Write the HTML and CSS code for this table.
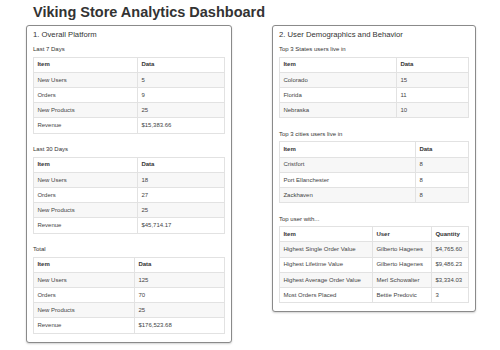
FILE: index.html
```html
<!DOCTYPE html>
<html>
<head>
<meta charset="utf-8">
<link rel="stylesheet" href="styles.css">
</head>
<body>
<h1 class="page-title">Viking Store Analytics Dashboard</h1>
<div class="columns">
  <section class="panel panel-left">
    <h4 class="panel-title">1. Overall Platform</h4>
    <h5 class="sub first">Last 7 Days</h5>
    <table class="tbl">
      <thead><tr><th class="w104">Item</th><th>Data</th></tr></thead>
      <tbody>
        <tr><td>New Users</td><td>5</td></tr>
        <tr><td>Orders</td><td>9</td></tr>
        <tr><td>New Products</td><td>25</td></tr>
        <tr><td>Revenue</td><td>$15,383.66</td></tr>
      </tbody>
    </table>
    <h5 class="sub">Last 30 Days</h5>
    <table class="tbl">
      <thead><tr><th class="w104">Item</th><th>Data</th></tr></thead>
      <tbody>
        <tr><td>New Users</td><td>18</td></tr>
        <tr><td>Orders</td><td>27</td></tr>
        <tr><td>New Products</td><td>25</td></tr>
        <tr><td>Revenue</td><td>$45,714.17</td></tr>
      </tbody>
    </table>
    <h5 class="sub">Total</h5>
    <table class="tbl">
      <thead><tr><th class="w101">Item</th><th>Data</th></tr></thead>
      <tbody>
        <tr><td>New Users</td><td>125</td></tr>
        <tr><td>Orders</td><td>70</td></tr>
        <tr><td>New Products</td><td>25</td></tr>
        <tr><td>Revenue</td><td>$176,523.68</td></tr>
      </tbody>
    </table>
  </section>
  <section class="panel panel-right">
    <h4 class="panel-title">2. User Demographics and Behavior</h4>
    <h5 class="sub first">Top 3 States users live in</h5>
    <table class="tbl">
      <thead><tr><th class="w117">Item</th><th>Data</th></tr></thead>
      <tbody>
        <tr><td>Colorado</td><td>15</td></tr>
        <tr><td>Florida</td><td>11</td></tr>
        <tr><td>Nebraska</td><td>10</td></tr>
      </tbody>
    </table>
    <h5 class="sub">Top 3 cities users live in</h5>
    <table class="tbl">
      <thead><tr><th class="w136">Item</th><th>Data</th></tr></thead>
      <tbody>
        <tr><td>Cristfort</td><td>8</td></tr>
        <tr><td>Port Ellanchester</td><td>8</td></tr>
        <tr><td>Zackhaven</td><td>8</td></tr>
      </tbody>
    </table>
    <h5 class="sub">Top user with...</h5>
    <table class="tbl">
      <thead><tr><th class="w93">Item</th><th class="w59">User</th><th>Quantity</th></tr></thead>
      <tbody>
        <tr><td>Highest Single Order Value</td><td>Gilberto Hagenes</td><td>$4,765.60</td></tr>
        <tr><td>Highest Lifetime Value</td><td>Gilberto Hagenes</td><td>$9,486.23</td></tr>
        <tr><td>Highest Average Order Value</td><td>Merl Schowalter</td><td>$3,334.03</td></tr>
        <tr><td>Most Orders Placed</td><td>Bettie Predovic</td><td>3</td></tr>
      </tbody>
    </table>
  </section>
</div>
</body>
</html>
```

FILE: styles.css
```css
html, body {
  margin: 0;
  padding: 0;
  background: #ffffff;
}
body {
  font-family: "Liberation Sans", Arial, Helvetica, sans-serif;
  color: #333333;
  width: 500px;
  height: 350px;
  overflow: hidden;
}
.page-title {
  margin: 0 0 0 33px;
  padding-top: 3px;
  font-size: 14.5px;
  line-height: 18px;
  font-weight: bold;
  color: #333333;
}
.columns {
  display: flex;
  align-items: flex-start;
  gap: 40px;
  padding-left: 26px;
  margin-top: 4px;
}
.panel {
  box-sizing: border-box;
  border: 1px solid #8a8a8a;
  border-radius: 3px;
  box-shadow: 0 1px 2px rgba(0, 0, 0, 0.18);
  padding: 3px 6px 8px 6px;
  background: #fff;
}
.panel-left { width: 206px; }
.panel-right { width: 204px; }
.panel-title {
  margin: 0;
  font-size: 7.7px;
  line-height: 11px;
  font-weight: normal;
  color: #333;
}
.sub {
  margin: 11.5px 0 3px 0;
  font-size: 6px;
  line-height: 8.6px;
  font-weight: normal;
  color: #333;
}
.sub.first { margin-top: 5px; }
.tbl {
  width: 100%;
  border-collapse: collapse;
  table-layout: fixed;
  font-size: 6px;
  line-height: 8.6px;
}
.tbl th, .tbl td {
  box-sizing: border-box;
  border: 1px solid #e2e2e2;
  padding: 2.8px 3.4px;
  text-align: left;
  vertical-align: top;
  white-space: nowrap;
  overflow: hidden;
}
.tbl th {
  font-weight: bold;
  color: #333;
}
.tbl td {
  color: #444;
}
.tbl tbody tr:nth-child(odd) td {
  background: #f7f7f7;
}
.w104 { width: 104px; }
.w101 { width: 101px; }
.w117 { width: 117px; }
.w136 { width: 136px; }
.w93 { width: 93px; }
.w59 { width: 59px; }
```
